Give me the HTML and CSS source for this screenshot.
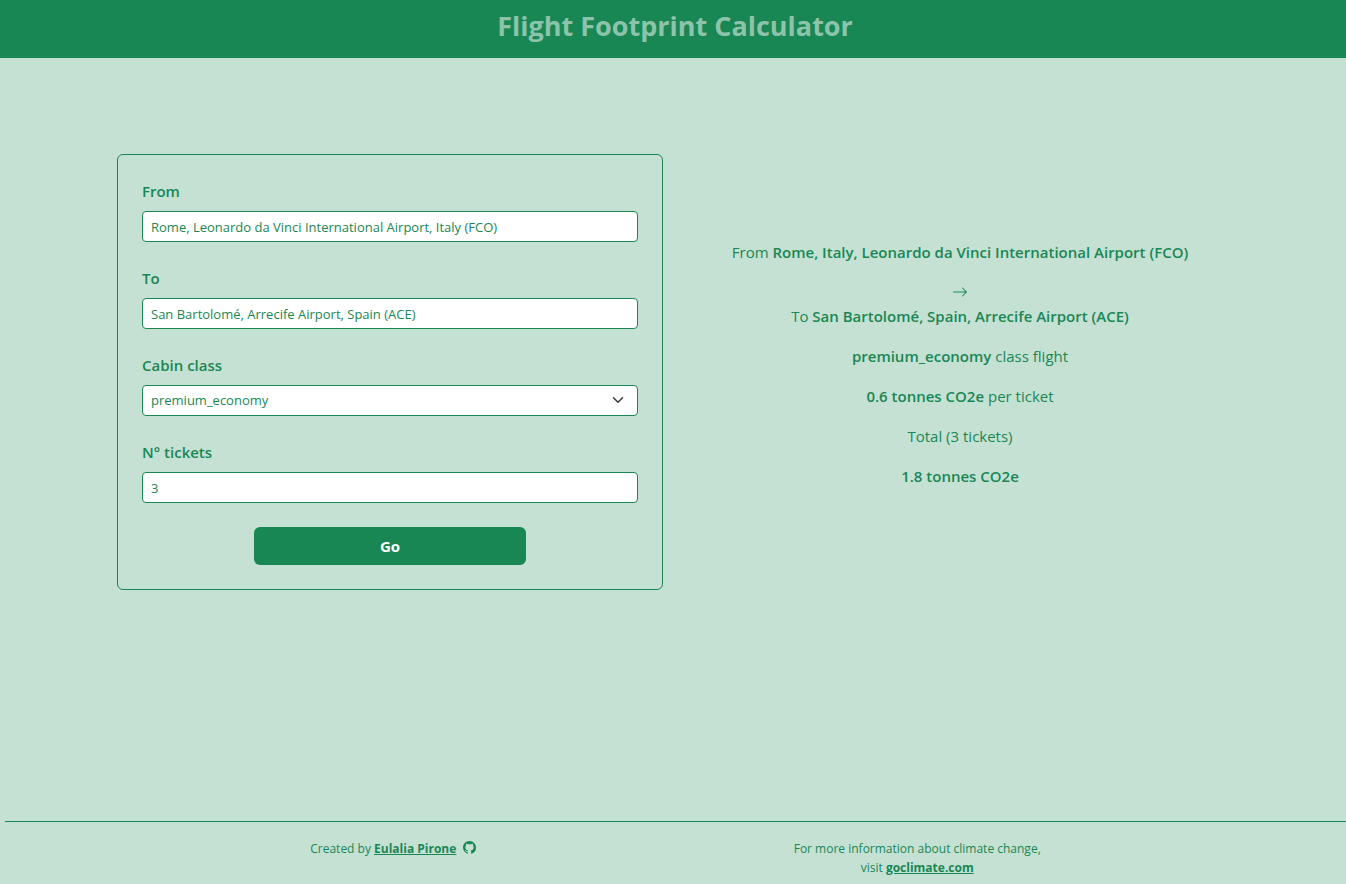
FILE: index.html
```html
<!DOCTYPE html>
<html lang="en">
<head>
<meta charset="utf-8">
<meta name="viewport" content="width=device-width, initial-scale=1">
<title>Flight Footprint Calculator</title>
<link rel="stylesheet" href="styles.css">
</head>
<body>
<header class="site-header"><h1 class="site-title">Flight Footprint Calculator</h1></header>
<main class="content">
  <form class="card">
    <div class="field">
      <label class="label" for="from">From</label>
      <input class="control" id="from" type="text" value="Rome, Leonardo da Vinci International Airport, Italy (FCO)">
    </div>
    <div class="field">
      <label class="label" for="to">To</label>
      <input class="control" id="to" type="text" value="San Bartolomé, Arrecife Airport, Spain (ACE)">
    </div>
    <div class="field">
      <label class="label" for="cabin">Cabin class</label>
      <div class="select-wrap">
        <select class="control" id="cabin">
          <option>economy</option>
          <option selected>premium_economy</option>
          <option>business</option>
          <option>first</option>
        </select>
        <svg class="chevron" viewBox="0 0 16 16" aria-hidden="true"><path fill="none" stroke="#343a40" stroke-linecap="round" stroke-linejoin="round" stroke-width="2" d="m2 5 6 6 6-6"/></svg>
      </div>
    </div>
    <div class="field">
      <label class="label" for="tickets">N° tickets</label>
      <input class="control" id="tickets" type="text" inputmode="numeric" value="3">
    </div>
    <button class="submit" type="button">Go</button>
  </form>
  <section class="result">
    <p class="line">From <strong>Rome, Italy, Leonardo da Vinci International Airport (FCO)</strong></p>
    <svg class="arrow" viewBox="0 0 16 16" aria-hidden="true"><path fill="currentColor" fill-rule="evenodd" d="M1 8a.5.5 0 0 1 .5-.5h11.793l-3.147-3.146a.5.5 0 0 1 .708-.708l4 4a.5.5 0 0 1 0 .708l-4 4a.5.5 0 0 1-.708-.708L13.293 8.500H1.500A.5.5 0 0 1 1 8"/></svg>
    <p class="line">To <strong>San Bartolomé, Spain, Arrecife Airport (ACE)</strong></p>
    <p class="line"><strong>premium_economy</strong> class flight</p>
    <p class="line"><strong>0.6 tonnes CO2e</strong> per ticket</p>
    <p class="line">Total (3 tickets)</p>
    <p class="line"><strong>1.8 tonnes CO2e</strong></p>
  </section>
</main>
<footer class="site-footer">
  <p class="note">Created by <a class="link" href="#author">Eulalia Pirone</a>
    <svg class="github" viewBox="0 0 16 16" aria-hidden="true"><path fill="currentColor" d="M8 0C3.580 0 0 3.580 0 8c0 3.540 2.290 6.530 5.470 7.590.4.070.550-.170.550-.380 0-.190-.010-.820-.010-1.490-2.010.370-2.530-.490-2.690-.940-.090-.230-.480-.940-.820-1.130-.280-.150-.680-.520-.010-.530.630-.010 1.080.580 1.230.820.720 1.210 1.870.870 2.330.660.070-.520.280-.870.510-1.070-1.780-.2-3.640-.890-3.640-3.950 0-.870.310-1.590.820-2.150-.080-.2-.360-1.020.080-2.120 0 0 .670-.210 2.200.820.640-.180 1.320-.270 2-.270s1.360.090 2 .270c1.530-1.040 2.200-.820 2.200-.820.440 1.100.160 1.920.080 2.120.510.560.820 1.270.820 2.150 0 3.070-1.870 3.750-3.650 3.950.290.250.540.730.540 1.480 0 1.070-.010 1.930-.010 2.200 0 .210.150.460.550.380A8.010 8.010 0 0 0 16 8c0-4.420-3.580-8-8-8"/></svg></p>
  <p class="note">For more information about climate change,<br>visit <a class="link" href="#goclimate">goclimate.com</a></p>
</footer>
</body>
</html>
```
FILE: styles.css
```css
*, *::before, *::after { box-sizing: border-box; }

body {
  margin: 0;
  min-height: 100vh;
  display: flex;
  flex-direction: column;
  background: #c5e1d4;
  color: #198754;
  font: 400 16px/24px "Open Sans", "Noto Sans", sans-serif;
}

.site-header {
  padding: 9px 0 15px 4px;
  background: #198754;
  text-align: center;
}

.site-title {
  margin: 0;
  color: #8cc3aa;
  font-size: 27px;
  line-height: 34px;
  font-weight: 700;
}

.content {
  width: 100%;
  max-width: 1144px;
  margin: 96px auto 48px;
  padding-left: 4px;
  display: grid;
  grid-template-columns: 1fr 1fr;
  align-items: center;
}

.card {
  margin: 0 12px;
  padding: 24px;
  border: 1px solid #198754;
  border-radius: 6px;
}

.field { margin-bottom: 24px; }

.label {
  display: block;
  margin-bottom: 8px;
  font-size: 15px;
  font-weight: 600;
}

.control {
  display: block;
  width: 100%;
  height: 31px;
  padding: 4px 8px;
  border: 1px solid #198754;
  border-radius: 4px;
  background: #fff;
  color: #198754;
  font: inherit;
  font-size: 13px;
  line-height: 21px;
  appearance: none;
}

.select-wrap { position: relative; }

.chevron {
  position: absolute;
  right: 14px;
  top: 9px;
  width: 12px;
  height: 12px;
  pointer-events: none;
}

.submit {
  display: block;
  width: 55%;
  height: 38px;
  margin: 0 auto;
  border: 0;
  border-radius: 6px;
  background: #198754;
  color: #fff;
  font: inherit;
  font-size: 15px;
  font-weight: 700;
}

.result {
  padding: 0 12px;
  font-size: 15px;
  text-align: center;
}

.line { margin: 0 0 16px; }
.line strong { font-weight: 600; }

.arrow {
  display: block;
  width: 16px;
  height: 24px;
  margin: 0 auto;
}

.site-footer {
  margin: auto 0 0 5px;
  padding: 17px 0 7px;
  border-top: 1px solid #198754;
  display: flex;
  justify-content: space-evenly;
  gap: 12px;
  font-size: 12px;
  line-height: 19px;
  text-align: center;
}

.note { margin: 0; }

.link {
  color: inherit;
  font-weight: 700;
}

.github {
  width: 13px;
  height: 13px;
  margin-left: 4px;
  vertical-align: -1px;
}
```
